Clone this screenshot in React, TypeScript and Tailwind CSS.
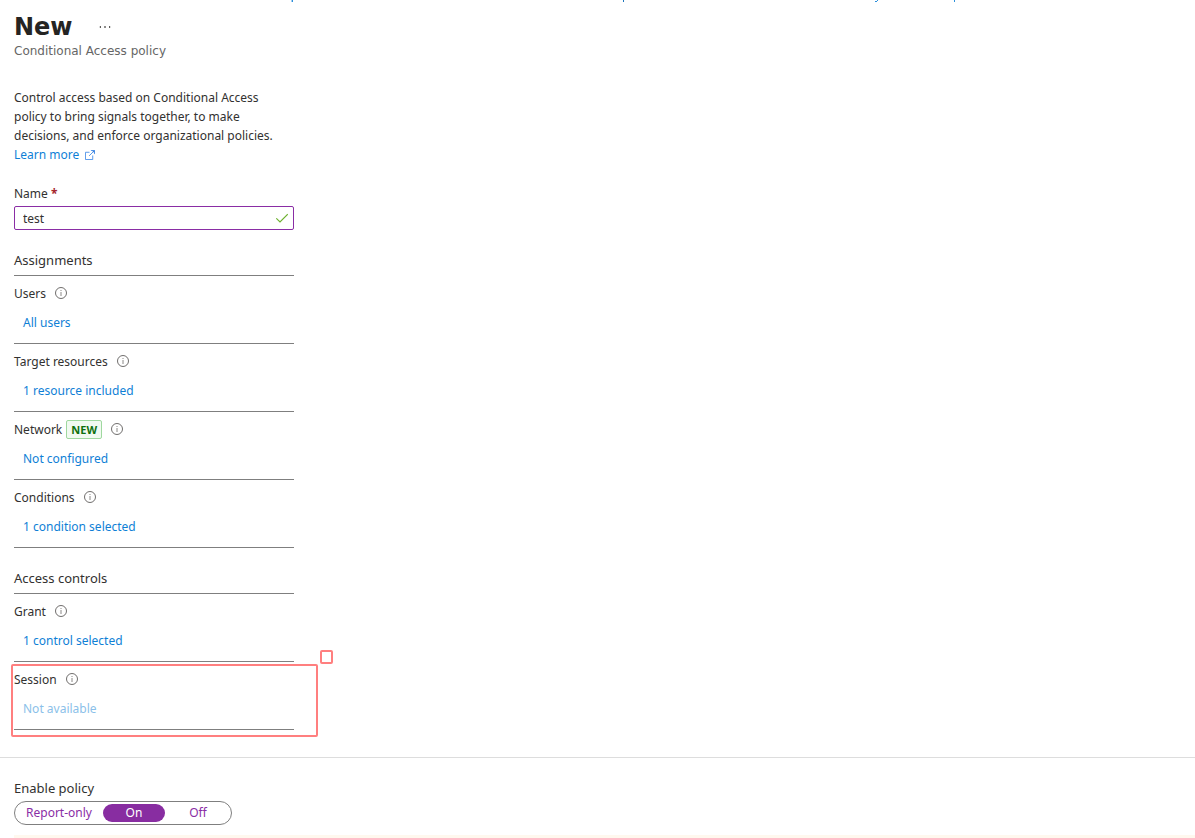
import { useState } from "react";
import type { ReactNode } from "react";

function InfoIcon() {
  return (
    <svg className="h-3 w-3 shrink-0" viewBox="0 0 12 12" fill="none" aria-hidden="true">
      <circle cx="6" cy="6" r="5.5" stroke="#605e5c" strokeWidth="0.9" />
      <path d="M6 5v4" stroke="#8a8886" />
      <path d="M6 3v1" stroke="#8a8886" />
    </svg>
  );
}

function SectionHeading({ children }: { children: ReactNode }) {
  return (
    <h2 className="mt-5 border-b border-[#7f7f7f] pb-[5px] text-[13px] leading-5">{children}</h2>
  );
}

type SettingProps = {
  label: string;
  value: string;
  badge?: string;
  disabled?: boolean;
};

function Setting({ label, value, badge, disabled }: SettingProps) {
  return (
    <div className="border-b border-[#7f7f7f] pt-2 pb-[10px]">
      <div className="flex h-[18px] items-center">
        <span>{label}</span>
        {badge && (
          <span className="ml-1 rounded-[2px] border border-[#9fd89f] bg-[#f1faf1] px-1 text-[11px] leading-[17px] font-bold text-[#0e700e]">
            {badge}
          </span>
        )}
        <button type="button" aria-label={`About ${label}`} className="ml-[9px]">
          <InfoIcon />
        </button>
      </div>
      <div className="mt-[11px] ml-[9px] h-5 leading-5">
        {disabled ? (
          <span className="text-[#8bbfe9]">{value}</span>
        ) : (
          <a href="#" className="text-[#0f7fd6]">
            {value}
          </a>
        )}
      </div>
    </div>
  );
}

const modes = [
  { name: "Report-only", width: "w-[88px]" },
  { name: "On", width: "w-[62px]" },
  { name: "Off", width: "w-[66px]" },
];

export default function App() {
  const [name, setName] = useState("test");
  const [mode, setMode] = useState("On");

  return (
    <div className="relative overflow-hidden bg-white font-['Noto_Sans',sans-serif] text-[12px] leading-[19px] text-[#323130]">
      <svg className="absolute top-0 left-0 h-[2px] w-[1195px]" viewBox="0 0 1195 2" aria-hidden="true">
        <path d="M291 0h1v2h-1z" fill="#a9d0f0" />
        <path d="M292 0h1v2h-1zM954 0h1v2h-1z" fill="#2b8fdb" />
        <path d="M623 0h1v2h-1z" fill="#1c75bc" />
        <path d="M877 0h1v1h-1zM875 1h2v1h-2z" fill="#2b8fdb" />
      </svg>

      <header className="px-[14px] pt-[11px] font-['DejaVu_Sans',sans-serif]">
        <div className="flex items-center">
          <h1 className="text-[24px] leading-8 font-bold text-[#252423]">New</h1>
          <button type="button" aria-label="More options" className="ml-[26px]">
            <svg className="h-3 w-3" viewBox="0 0 12 12" fill="#605e5c" aria-hidden="true">
              <path d="M.8 5H2v2H.8zM5.3 5h1.4v2H5.3zM10 5h1.2v2H10z" />
            </svg>
          </button>
        </div>
        <p className="text-[12px] leading-4 text-[#666666]">Conditional Access policy</p>
      </header>

      <main className="px-[14px] pt-[29px] pb-[27px]">
        <div className="w-[280px]">
          <p className="pr-3">
            Control access based on Conditional Access policy to bring signals together, to make
            decisions, and enforce organizational policies.
          </p>
          <a href="#" className="flex items-center gap-[6px] text-[#0f7fd6]">
            Learn more
            <svg className="h-[10px] w-[10px]" viewBox="0 0 11 11" fill="none" stroke="#4a90e8" aria-hidden="true">
              <path d="M5 2.5H.5v8h8V6M6.5.5h4v4M10.5.5 4.5 6.5" />
              <path d="M7.5.5h3v3z" fill="#3b82dd" stroke="none" />
            </svg>
          </a>

          <label htmlFor="policy-name" className="mt-5 block">
            Name <span className="font-bold text-[#a4262c]">*</span>
          </label>
          <div className="mt-[3px] flex h-6 items-center rounded-[2px] border border-[#8a2da5] pr-[5px] pl-2">
            <input
              id="policy-name"
              className="min-w-0 flex-1 outline-none"
              value={name}
              onChange={(e) => setName(e.target.value)}
            />
            <svg className="h-3 w-3" viewBox="0 0 12 12" fill="none" stroke="#6bb02c" aria-hidden="true">
              <path d="M.3 6.3 4 10 11.8 2.2" strokeWidth="1.2" />
            </svg>
          </div>

          <SectionHeading>Assignments</SectionHeading>
          <Setting label="Users" value="All users" />
          <Setting label="Target resources" value="1 resource included" />
          <Setting label="Network" value="Not configured" badge="NEW" />
          <Setting label="Conditions" value="1 condition selected" />

          <SectionHeading>Access controls</SectionHeading>
          <Setting label="Grant" value="1 control selected" />
          <div className="relative">
            <Setting label="Session" value="Not available" disabled />
            <div className="pointer-events-none absolute top-[2px] -right-6 -bottom-[7px] -left-[3px] rounded-[2px] border-2 border-[#ff7f7f]" />
            <div className="pointer-events-none absolute -top-3 -right-[39px] h-[14px] w-[13px] rounded-[2px] border-2 border-[#ff7f7f]" />
          </div>
        </div>
      </main>

      <footer className="border-t border-[#dddddd] pt-5 pl-[14px]">
        <fieldset>
          <legend className="text-[13px] leading-5">Enable policy</legend>
          <div className="mt-[3px] inline-flex h-6 items-center rounded-full border border-[#7f7f7f] align-top">
            {modes.map((m) => (
              <label
                key={m.name}
                className={`${m.width} relative cursor-pointer rounded-full text-center leading-[18px] ${
                  mode === m.name ? "bg-[#882da1] text-white" : "text-[#8a2da5]"
                }`}
              >
                <input
                  type="radio"
                  name="enable-policy"
                  className="sr-only"
                  checked={mode === m.name}
                  onChange={() => setMode(m.name)}
                />
                {m.name}
              </label>
            ))}
          </div>
        </fieldset>
        <div className="mt-[10px] h-[3px] bg-[#fff8ee]" />
      </footer>
    </div>
  );
}
